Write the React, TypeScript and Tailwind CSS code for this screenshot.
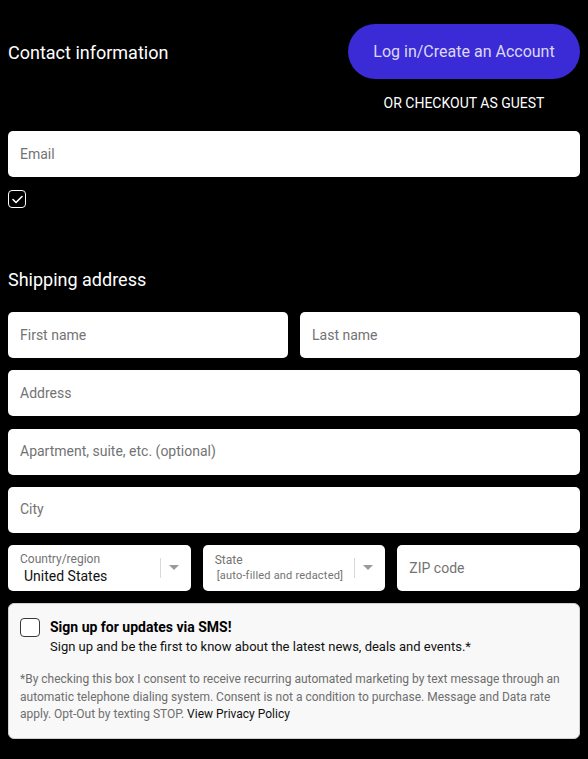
import React from "react";

const font = { fontFamily: "Roboto, 'Noto Sans', Arial, sans-serif" };

function Field({ label }: { label: string }) {
  return (
    <div className="flex h-[46px] items-center rounded-[5px] bg-white px-3 text-[14px] text-[#737373]">
      {label}
    </div>
  );
}

function Caret() {
  return (
    <svg width="10" height="6" viewBox="0 0 10 6" className="block">
      <path d="M0 0 L10 0 L5 5 Z" fill="#9a9a9a" />
    </svg>
  );
}

export default function App() {
  return (
    <div className="min-h-[759px] w-full bg-black px-2 pb-5" style={font}>
      <div className="flex items-center justify-between pt-6">
        <div className="pt-[2px] text-[18px] leading-6 text-white">Contact information</div>
        <div className="flex h-[55px] w-[232px] items-center justify-center rounded-full bg-[#3a2bd6] text-[16px] text-[#dcd8f4]">
          Log in/Create an Account
        </div>
      </div>
      <div className="mt-4 flex justify-end">
        <div className="w-[232px] text-center text-[14px] leading-4 text-white">OR CHECKOUT AS GUEST</div>
      </div>
      <div className="mt-5">
        <Field label="Email" />
      </div>
      <div className="mt-[13px] flex h-[18px] w-[18px] items-center justify-center rounded-[4px] border border-white">
        <svg width="11" height="9" viewBox="0 0 11 9">
          <path d="M1 4.5 L4 7.5 L10 1.5" stroke="white" strokeWidth="1.6" fill="none" strokeLinecap="round" strokeLinejoin="round" />
        </svg>
      </div>
      <div className="mt-[60px] text-[18px] leading-6 text-white">Shipping address</div>
      <div className="mt-[20px] flex flex-col gap-[12.25px]">
        <div className="grid grid-cols-2 gap-3">
          <Field label="First name" />
          <Field label="Last name" />
        </div>
        <Field label="Address" />
        <Field label="Apartment, suite, etc. (optional)" />
        <Field label="City" />
        <div className="grid grid-cols-3 gap-3">
          <div className="flex h-[46px] items-center rounded-[5px] bg-white pl-3 pr-[12px]">
            <div className="flex flex-1 flex-col">
              <span className="text-[12px] leading-[15px] text-[#737373]">Country/region</span>
              <span className="pl-1 text-[14px] leading-[18px] text-[#111]">United States</span>
            </div>
            <div className="h-[20px] w-px bg-[#d9d9d9]" />
            <div className="pl-[8px]">
              <Caret />
            </div>
          </div>
          <div className="flex h-[46px] items-center rounded-[5px] bg-white pl-3 pr-[12px]">
            <div className="flex flex-1 flex-col">
              <span className="text-[12px] leading-[15px] text-[#737373]">State</span>
              <span className="pl-[2px] text-[11px] leading-[16px] tracking-[0.2px] text-[#737373]">[auto-filled and redacted]</span>
            </div>
            <div className="h-[20px] w-px bg-[#d9d9d9]" />
            <div className="pl-[8px]">
              <Caret />
            </div>
          </div>
          <Field label="ZIP code" />
        </div>
        <div className="rounded-[6px] border border-[#d0d0d0] bg-[#f8f8f8] px-[11px] pb-[14px] pt-[13px]">
          <div className="flex gap-[10px]">
            <div className="mt-[1px] h-[19px] w-[20px] shrink-0 rounded-[4px] border-[1.5px] border-[#3a3a3a] bg-white" />
            <div className="flex flex-col">
              <span className="text-[14px] font-bold leading-[20px] text-black">Sign up for updates via SMS!</span>
              <span className="text-[13px] leading-[20px] text-[#111]">
                Sign up and be the first to know about the latest news, deals and events.*
              </span>
            </div>
          </div>
          <p className="mt-[14px] text-[12px] leading-[17.6px] text-[#6e6e6e]">
            *By checking this box I consent to receive recurring automated marketing by text message through an automatic telephone dialing system. Consent is not a condition to purchase. Message and Data rate apply. Opt-Out by texting STOP. <span className="text-[#111]">View Privacy Policy</span>
          </p>
        </div>
      </div>
    </div>
  );
}
